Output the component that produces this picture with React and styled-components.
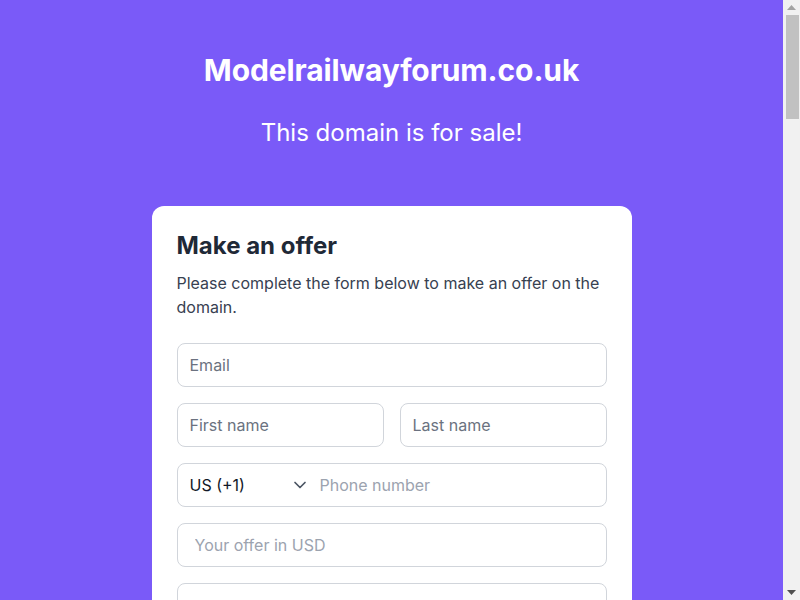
import React from 'react';
import styled, { createGlobalStyle } from 'styled-components';

const GlobalStyle = createGlobalStyle`
  body {
    margin: 0;
    background: #7a5af8;
    font-family: Inter, "Noto Sans", sans-serif;
  }
`;

const Page = styled.main`
  display: flex;
  flex-direction: column;
  align-items: center;
  margin-right: 17px;
  padding: 52px 16px 0;
`;

const Title = styled.h1`
  margin: 0;
  font-size: 30px;
  line-height: 36px;
  font-weight: 700;
  color: #ffffff;
  letter-spacing: -0.1px;
`;

const Subtitle = styled.p`
  margin: 29px 0 57px;
  font-size: 24px;
  line-height: 32px;
  color: #ffffff;
`;

const Card = styled.section`
  width: 480px;
  box-sizing: border-box;
  background: #ffffff;
  border-radius: 12px;
  padding: 24px 25px 25px;
`;

const CardHeading = styled.h2`
  margin: 0;
  font-size: 24px;
  line-height: 32px;
  font-weight: 700;
  color: #1f2937;
`;

const Intro = styled.p`
  margin: 9px 0 24px;
  font-size: 16px;
  line-height: 24px;
  color: #374151;
`;

const Form = styled.form`
  display: flex;
  flex-direction: column;
  gap: 16px;
`;

const Row = styled.div`
  display: flex;
  gap: 16px;
  & > * {
    flex: 1;
  }
`;

const Field = styled.input`
  display: block;
  min-width: 0;
  height: 44px;
  box-sizing: border-box;
  border: 1px solid #d1d5db;
  border-radius: 8px;
  padding: 0 ${p => (p.$wide ? '17px' : '12px')};
  font-family: inherit;
  font-size: 16px;
  color: #111827;
  background: #fff;
  &::placeholder {
    color: ${p => (p.$light ? '#9ca3af' : '#6b7280')};
  }
`;

const Area = styled.textarea`
  height: 120px;
  box-sizing: border-box;
  border: 1px solid #d1d5db;
  border-radius: 8px;
  padding: 16px 12px;
  font-family: inherit;
  font-size: 16px;
  resize: none;
  &::placeholder {
    color: #6b7280;
  }
`;

const PhoneBox = styled.div`
  display: flex;
  align-items: center;
  height: 44px;
  box-sizing: border-box;
  border: 1px solid #d1d5db;
  border-radius: 8px;
`;

const Country = styled.div`
  display: flex;
  align-items: center;
  justify-content: space-between;
  width: 130px;
  box-sizing: border-box;
  padding: 0 0 0 12px;
  font-size: 16px;
  color: #111827;
`;

const PhoneInput = styled.input`
  flex: 1;
  min-width: 0;
  border: none;
  outline: none;
  padding: 0 12px;
  font-family: inherit;
  font-size: 16px;
  &::placeholder {
    color: #9ca3af;
  }
`;

const Submit = styled.button`
  height: 48px;
  border: none;
  border-radius: 8px;
  background: #7a5af8;
  color: #fff;
  font-family: inherit;
  font-size: 16px;
  font-weight: 600;
`;

const Info = styled.section`
  width: 480px;
  box-sizing: border-box;
  margin: 40px 0 0;
  padding: 0 0 2200px;
  color: #ffffff;
  font-size: 16px;
  line-height: 24px;
`;

/* window scrollbar drawn over the right edge */
const ScrollTrack = styled.div`
  position: fixed;
  top: 0;
  right: 0;
  bottom: 0;
  width: 17px;
  background: #f1f1f1;
  display: flex;
  flex-direction: column;
  align-items: center;
`;

const ScrollArrow = styled.div`
  height: 15px;
  display: flex;
  align-items: center;
  justify-content: center;
`;

const ScrollThumb = styled.div`
  width: 13px;
  height: 104px;
  margin-left: 1px;
  background: #c1c1c1;
`;

const Spacer = styled.div`
  flex: 1;
`;

const Chevron = () => (
  <svg width="16" height="16" viewBox="0 0 16 16" fill="none" stroke="#4b5563" strokeWidth="1.7" strokeLinecap="round" strokeLinejoin="round">
    <path d="M3 5.5 L8 10.5 L13 5.5" />
  </svg>
);

const Arrow = ({ up, color }) => (
  <svg width="9" height="5" viewBox="0 0 9 5">
    <path d={up ? 'M0 5 L4.5 0 L9 5 Z' : 'M0 0 L4.5 5 L9 0 Z'} fill={color} />
  </svg>
);

export default function App() {
  return (
    <>
      <GlobalStyle />
      <Page>
        <Title>Modelrailwayforum.co.uk</Title>
        <Subtitle>This domain is for sale!</Subtitle>
        <Card>
          <CardHeading>Make an offer</CardHeading>
          <Intro>Please complete the form below to make an offer on the domain.</Intro>
          <Form onSubmit={e => e.preventDefault()}>
            <Field placeholder="Email" />
            <Row>
              <Field placeholder="First name" />
              <Field placeholder="Last name" />
            </Row>
            <PhoneBox>
              <Country>
                US (+1)
                <Chevron />
              </Country>
              <PhoneInput placeholder="Phone number" />
            </PhoneBox>
            <Field $wide $light placeholder="Your offer in USD" />
            <Area placeholder="Message" />
            <Submit type="submit">Submit offer</Submit>
          </Form>
        </Card>
        <Info>
          Interested in this domain? Send your offer and the owner will get back to you.
        </Info>
      </Page>
      <ScrollTrack>
        <ScrollArrow><Arrow up color="#a3a3a3" /></ScrollArrow>
        <ScrollThumb />
        <Spacer />
        <ScrollArrow><Arrow color="#505050" /></ScrollArrow>
      </ScrollTrack>
    </>
  );
}
